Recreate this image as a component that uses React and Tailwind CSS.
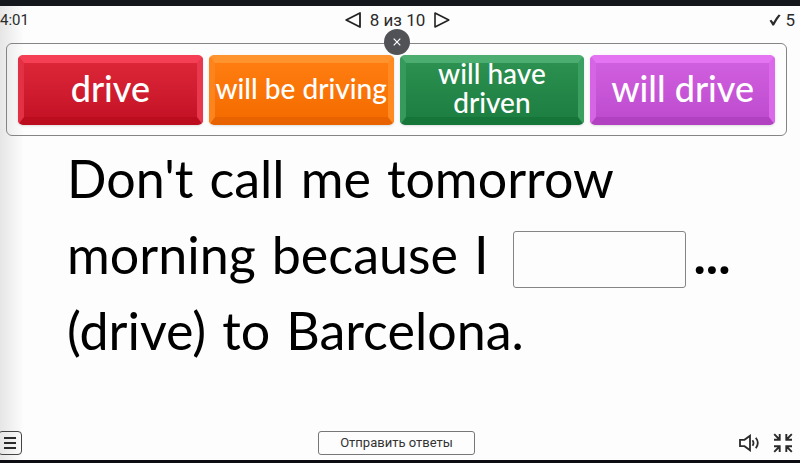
const tiles = [
  {
    label: 'drive',
    size: 'text-[36px] leading-10',
    color: 'from-[#dc2638] to-[#c51226] border-t-[#f53f55] border-l-[#e23045] border-r-[#e8384d] border-b-[#bb0d1e]',
  },
  {
    label: 'will be driving',
    size: 'text-[28px] leading-[29px]',
    color: 'from-[#ff7d10] to-[#f56c00] border-t-[#ff932e] border-l-[#fd841c] border-r-[#ff8a22] border-b-[#e86300]',
  },
  {
    label: 'will have driven',
    size: 'text-[28px] leading-[29px]',
    color: 'from-[#2b9050] to-[#1d7f42] border-t-[#4bae70] border-l-[#359a5b] border-r-[#3b9f61] border-b-[#16763a]',
  },
  {
    label: 'will drive',
    size: 'text-[36px] leading-10',
    color: 'from-[#d05fdf] to-[#bf4ccf] border-t-[#e574f3] border-l-[#d665e5] border-r-[#da6ae9] border-b-[#b141c0]',
  },
]

const sentence = ["Don't", 'call', 'me', 'tomorrow', 'morning', 'because', 'I', null, '...', '(drive)', 'to', 'Barcelona.']

const Header = () => {
  return (
    <header className="grid grid-cols-[1fr_auto_1fr] items-center h-[37px] pr-[5px] pb-[10px] text-[17px] leading-5 text-[#2b2b2b]">
      <span className="text-[15px]">4:01</span>
      <nav className="flex items-center gap-[9px]">
        <button type="button" aria-label="Назад">
          <svg width="16" height="16" viewBox="0 0 16 16" fill="none" stroke="#222" strokeWidth="1.8" strokeLinejoin="round">
            <path d="M15 1v14L1.200 8z" />
          </svg>
        </button>
        <span>8 из 10</span>
        <button type="button" aria-label="Вперёд">
          <svg width="16" height="16" viewBox="0 0 16 16" fill="none" stroke="#222" strokeWidth="1.6" strokeLinejoin="round">
            <path d="M1 1v14L14.800 8z" />
          </svg>
        </button>
      </nav>
      <div className="flex items-center justify-end gap-1">
        <svg width="12" height="12" viewBox="0 0 12 12" fill="#2b2b2b">
          <path d="M.5 6.800L2.300 5.800 4.300 8.200Q6.500 3.800 9.600.400L11.600 1.200Q8 5.600 5 11.600H3.400Q2.300 9 .5 6.800z" />
        </svg>
        <span>5</span>
      </div>
    </header>
  )
}

const Tile = ({ label, size, color }) => {
  return (
    <button
      type="button"
      className={`h-[70px] flex items-center justify-center rounded-[5px] border-x-[6px] border-t-8 border-b-8 bg-linear-to-b shadow-sm text-white text-center font-medium ${size} ${color}`}
    >
      <span className="-mx-1 -mt-3 -mb-2">{label}</span>
    </button>
  )
}

const Tray = () => {
  return (
    <section className="relative ml-[6px] mr-[13px] grid grid-cols-4 gap-[6px] px-[11px] pt-[11px] pb-[10px] border border-[#858585] rounded-md font-[Lato,sans-serif]">
      {tiles.map((tile) => (
        <Tile key={tile.label} {...tile} />
      ))}
      <button
        type="button"
        aria-label="Закрыть"
        className="absolute left-1/2 -top-[15px] -translate-x-1/2 size-[26px] rounded-full bg-[#505256] flex items-center justify-center"
      >
        <svg width="8" height="8" viewBox="0 0 8 8" stroke="#fff" strokeWidth="1.200">
          <path d="M.7.700l6.600 6.600M7.300.700L.7 7.300" />
        </svg>
      </button>
    </section>
  )
}

const Sentence = () => {
  return (
    <main className="flex-1 flex flex-wrap content-start items-center gap-x-4 px-[67px] pt-1 text-[52px] leading-[76px] text-black font-[Lato,sans-serif]">
      {sentence.map((word, i) =>
        word ? (
          <span key={i} className={word === '...' ? 'font-bold' : ''}>
            {word}
          </span>
        ) : (
          <input
            key={i}
            type="text"
            aria-label="Ответ"
            className="w-[173px] h-[57px] mt-[10px] ml-2 -mr-2 border border-[#858585] rounded-[3px]"
          />
        )
      )}
    </main>
  )
}

const Footer = () => {
  return (
    <footer className="grid grid-cols-[1fr_auto_1fr] items-center pr-[7px] pb-[5px]">
      <button
        type="button"
        aria-label="Меню"
        className="-ml-[2px] w-6 h-6 flex items-center justify-center border border-[#444] rounded-[4px]"
      >
        <svg width="12" height="12" viewBox="0 0 12 12" stroke="#2b2b2b" strokeWidth="2">
          <path d="M0 1h12M0 6h12M0 11h12" />
        </svg>
      </button>
      <button type="button" className="w-[157px] h-6 border border-[#777] rounded-[3px] text-[13px] leading-5 text-[#333]">
        Отправить ответы
      </button>
      <div className="flex items-center justify-end gap-[13px]">
        <button type="button" aria-label="Звук">
          <svg width="21" height="18" viewBox="0 0 21 18" fill="none" stroke="#2b2b2b" strokeWidth="1.800">
            <path d="M1 5.800h4.500L11 1.700v14.600L5.500 12.200H1z" />
            <path d="M13.500 6.200q2 2.800 0 5.600M16.800 3.800q4 5.200 0 10.400" />
          </svg>
        </button>
        <button type="button" aria-label="Выйти из полноэкранного режима">
          <svg width="20" height="20" viewBox="0 0 20 20" fill="none" stroke="#2b2b2b" strokeWidth="1.900">
            <path d="M1.200 1.200l5.300 5.300M1 6.700h5.700V1M18.800 1.200l-5.300 5.300M19 6.700h-5.700V1" />
            <path d="M1.200 18.800l5.300-5.300M1 13.300h5.700V19M18.800 18.800l-5.300-5.300M19 13.300h-5.700V19" />
          </svg>
        </button>
      </div>
    </footer>
  )
}

export default function App() {
  return (
    <div className="min-h-screen flex flex-col overflow-hidden bg-[#fdfdfd] bg-[linear-gradient(to_right,#e6e6e6,#fdfdfd_24px)] border-t-[6px] border-t-[#14171b] border-b-[3px] border-b-[#0c0d12] font-[Roboto,sans-serif]">
      <Header />
      <Tray />
      <Sentence />
      <Footer />
    </div>
  )
}
